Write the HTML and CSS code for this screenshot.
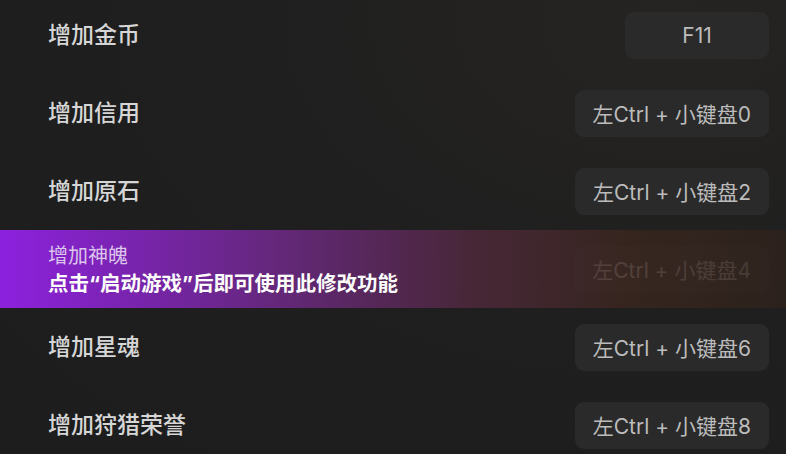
FILE: index.html
```html
<!DOCTYPE html>
<html lang="zh">
<head>
<meta charset="utf-8">
<link rel="stylesheet" href="styles.css">
</head>
<body>
<div class="list">
  <div class="row">
    <div class="label">增加金币</div>
    <div class="key key-short">F11</div>
  </div>
  <div class="row">
    <div class="label">增加信用</div>
    <div class="key">左Ctrl + 小键盘0</div>
  </div>
  <div class="row">
    <div class="label">增加原石</div>
    <div class="key">左Ctrl + 小键盘2</div>
  </div>
  <div class="row row-locked">
    <div class="label">增加神魄</div>
    <div class="key">左Ctrl + 小键盘4</div>
    <div class="overlay">
      <div class="overlay-title">增加神魄</div>
      <div class="overlay-msg">点击“启动游戏”后即可使用此修改功能</div>
    </div>
  </div>
  <div class="row">
    <div class="label">增加星魂</div>
    <div class="key">左Ctrl + 小键盘6</div>
  </div>
  <div class="row">
    <div class="label">增加狩猎荣誉</div>
    <div class="key">左Ctrl + 小键盘8</div>
  </div>
</div>
</body>
</html>
```
FILE: styles.css
```css
* { box-sizing: border-box; }
html, body {
  margin: 0;
  height: 100%;
  overflow: hidden;
}
body {
  background: radial-gradient(ellipse at 85% 5%, #262422 0%, #1f1f1f 45%, #1d1d1d 100%);
  font-family: Inter, "Noto Sans CJK SC", sans-serif;
  color: #d4d4d4;
}
.list {
  margin-top: -4px;
  display: flex;
  flex-direction: column;
}
.row {
  position: relative;
  height: 78px;
  display: flex;
  align-items: center;
  justify-content: space-between;
  padding: 0 17px 0 48px;
}
.label {
  font-size: 23px;
  font-weight: 500;
  color: #d6d6d6;
  line-height: 30px;
  margin-bottom: 1px;
}
.key {
  height: 47px;
  display: flex;
  align-items: center;
  justify-content: center;
  padding: 0 18px;
  background: #2a2a2a;
  border-radius: 9px;
  font-size: 21px;
  color: #bcbcbc;
}
.key-short { width: 144px; }
.row-locked .label { visibility: hidden; }
.overlay {
  position: absolute;
  inset: 0;
  display: flex;
  flex-direction: column;
  justify-content: center;
  padding-left: 48px;
  background: linear-gradient(90deg, rgba(143, 33, 226, 0.98) 0%, rgba(104, 40, 128, 0.95) 35%, rgba(76, 40, 58, 0.9) 60%, rgba(58, 38, 30, 0.82) 80%, rgba(46, 34, 28, 0.85) 100%);
}
.overlay-title {
  font-size: 20px;
  color: #dcc6ec;
  line-height: 28px;
  margin-top: 2px;
}
.overlay-msg {
  font-size: 20.5px;
  font-weight: 700;
  color: #ffffff;
  line-height: 28px;
}
```
